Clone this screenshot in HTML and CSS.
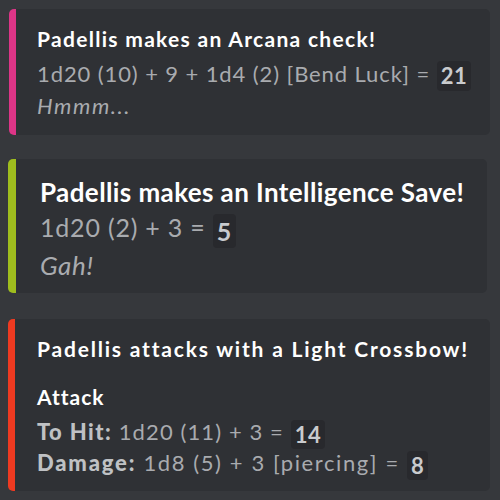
FILE: index.html
```html
<!DOCTYPE html>
<html>
<head>
<meta charset="utf-8">
<link rel="stylesheet" href="styles.css">
</head>
<body>
<div class="feed">
  <div class="embed embed-arcana">
    <div class="title">Padellis makes an Arcana check!</div>
    <div class="desc">1d20 (10) + 9 + 1d4 (2) [Bend Luck] = <span class="code">21</span></div>
    <div class="flavor">Hmmm...</div>
  </div>
  <div class="embed embed-save">
    <div class="title">Padellis makes an Intelligence Save!</div>
    <div class="desc">1d20 (2) + 3 = <span class="code">5</span></div>
    <div class="flavor">Gah!</div>
  </div>
  <div class="embed embed-attack">
    <div class="title">Padellis attacks with a Light Crossbow!</div>
    <div class="field-name">Attack</div>
    <div class="field-row"><b class="label">To Hit:</b> 1d20 (11) + 3 = <span class="code">14</span></div>
    <div class="field-row field-row-wide"><b class="label">Damage:</b> 1d8 (5) + 3 [piercing] = <span class="code">8</span></div>
  </div>
</div>
</body>
</html>
```

FILE: styles.css
```css
html, body {
  margin: 0;
  padding: 0;
  background: #36383c;
}
body {
  width: 500px;
  height: 500px;
  overflow: hidden;
  font-family: Lato, "Open Sans", sans-serif;
}
.feed {
  display: flex;
  flex-direction: column;
  padding: 9px 10px 0 9px;
}
.embed {
  background: #2f3135;
  border-left: 7px solid #dd3587;
  border-radius: 5px;
  padding: 16px 10px 15px 21px;
  box-sizing: border-box;
}
.embed-arcana {
  height: 126px;
}
.embed-save {
  margin-top: 24px;
  margin-left: -1px;
  margin-right: 3px;
  border-left: 8px solid #9fbd1e;
  padding: 16px 6px 16px 24px;
  height: 134px;
}
.embed-attack {
  margin-top: 26px;
  margin-left: -1px;
  border-left: 7px solid #ee3a21;
  padding: 16px 6px 18px 22px;
  height: 172px;
}
.title {
  color: #ffffff;
  font-weight: 700;
  font-size: 21px;
  line-height: 28px;
  letter-spacing: 1.3px;
  white-space: nowrap;
}
.desc {
  color: #a9abaf;
  font-size: 22px;
  line-height: 32px;
  letter-spacing: 0.9px;
  margin-top: 5px;
  white-space: nowrap;
}
.flavor {
  color: #a9abaf;
  font-style: italic;
  font-size: 22px;
  line-height: 30px;
  letter-spacing: 1.6px;
}
.embed-save .title {
  font-size: 26px;
  line-height: 34px;
  letter-spacing: 0.4px;
}
.embed-save .desc {
  font-size: 25px;
  line-height: 34px;
  letter-spacing: 0.8px;
  margin-top: 1px;
}
.embed-save .flavor {
  font-size: 26px;
  line-height: 34px;
  letter-spacing: 0.6px;
}
.embed-attack .title {
  letter-spacing: 1.8px;
}
.field-name {
  color: #ffffff;
  font-weight: 700;
  font-size: 21px;
  line-height: 28px;
  letter-spacing: 1px;
  margin-top: 20px;
}
.field-row {
  color: #a9abaf;
  font-size: 22px;
  line-height: 27px;
  letter-spacing: 1.1px;
  white-space: nowrap;
}
.field-row-wide {
  letter-spacing: 1.6px;
}
.field-name + .field-row {
  margin-top: 7px;
}
.label {
  color: #bfc1c4;
  font-weight: 900;
  letter-spacing: 1.4px;
}
.field-row-wide .label {
  letter-spacing: 1.8px;
}
.code {
  display: inline-block;
  background: #28292d;
  color: #c9cbce;
  font-weight: 700;
  border-radius: 4px;
  padding: 0 4px;
  line-height: 30px;
  letter-spacing: 0.5px;
  vertical-align: middle;
}
.embed-save .code {
  line-height: 34px;
}
.field-row .code {
  line-height: 29px;
}
```
